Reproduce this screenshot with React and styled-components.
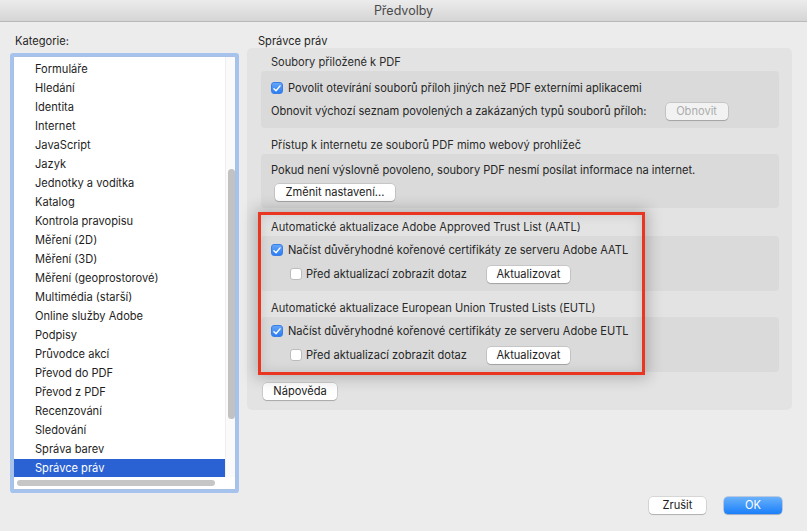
import React from 'react'
import styled, { createGlobalStyle } from 'styled-components'

const Global = createGlobalStyle`
  html, body { margin: 0; padding: 0; background: #ececec; }
  * { box-sizing: border-box; }
`

const Window = styled.div`
  width: 807px;
  height: 531px;
  background: #ececec;
  display: flex;
  flex-direction: column;
  font-family: Inter, "Liberation Sans", sans-serif;
  font-size: 11.1px;
  color: #262626;
  overflow: hidden;
`

const TitleBar = styled.div`
  height: 22px;
  flex: none;
  background: linear-gradient(#ececec, #d5d5d5);
  border-bottom: 1px solid #b9b9b9;
  display: flex;
  align-items: center;
  justify-content: center;
  font-size: 12.5px;
  color: #4a4a4a;
`

const Content = styled.div`
  flex: 1;
  display: flex;
  gap: 11px;
  padding: 0 15px 0 13px;
  min-height: 0;
`

const Sidebar = styled.div`
  width: 223px;
  display: flex;
  flex-direction: column;
`

const Caption = styled.div`
  line-height: 14px;
  margin-top: 12px;
  padding-left: ${p => p.$indent || 2}px;
  color: #262626;
`

const ListFrame = styled.div`
  margin-top: 8px;
  height: 434px;
  background: #fff;
  border: 1px solid #a9bfe3;
  box-shadow: 0 0 0 3px #a6c3ee;
  border-radius: 1px;
  display: grid;
  grid-template-columns: 1fr 10px;
  grid-template-rows: 1fr 12px;
`

const Items = styled.div`
  padding-top: 3px;
  overflow: hidden;
`

const Item = styled.div`
  height: 19px;
  line-height: 19px;
  padding-left: 21px;
  white-space: nowrap;
  color: ${p => (p.$selected ? '#fff' : '#1e1e1e')};
  background: ${p => (p.$selected ? '#2a62d3' : 'transparent')};
`

const VTrack = styled.div`
  background: #fafafa;
  border-left: 1px solid #efefef;
  padding: 0 1px 0 2px;
`

const VThumb = styled.div`
  margin-top: ${p => p.$top}px;
  height: ${p => p.$size}px;
  width: 7px;
  border-radius: 4px;
  background: #c2c2c2;
`

const HTrack = styled.div`
  grid-column: 1 / 3;
  padding: 3px 20px 0 3px;
`

const HThumb = styled.div`
  height: 6px;
  border-radius: 3px;
  background: #c6c6c6;
`

const Main = styled.div`
  flex: 1;
  display: flex;
  flex-direction: column;
`

const Panel = styled.div`
  position: relative;
  height: 362px;
  background: #e3e3e3;
  border-radius: 5px;
  padding: 7px 13px 0 14px;
`

const GroupLabel = styled.div`
  line-height: 15px;
  padding-left: 10px;
  margin-top: ${p => p.$gap || 0}px;
  margin-bottom: 1px;
  color: #2b2b2b;
`

const Box = styled.div`
  background: #dadada;
  border-radius: 4px;
  padding: ${p => p.$pt}px 10px ${p => p.$pb}px;
  display: flex;
  flex-direction: column;
  gap: ${p => p.$gap}px;
`

const Row = styled.div`
  height: 18px;
  display: flex;
  align-items: center;
  padding-left: ${p => p.$indent || 0}px;
  white-space: nowrap;
`

const Check = styled.span`
  width: 12px;
  height: 12px;
  flex: none;
  border-radius: 3px;
  margin-right: ${p => (p.$on ? 5 : 4)}px;
  display: inline-flex;
  align-items: center;
  justify-content: center;
  background: ${p => (p.$on ? 'linear-gradient(#63a5f8, #2d7df3)' : '#fff')};
  border: 1px solid ${p => (p.$on ? '#3a7fe6' : '#bcbcbc')};
`

const Button = styled.button`
  font: inherit;
  height: 17px;
  padding: 0;
  width: ${p => p.$w}px;
  margin-left: ${p => p.$ml || 0}px;
  border: none;
  border-radius: 4px;
  background: ${p => (p.$disabled ? '#f2f2f2' : '#fff')};
  color: ${p => (p.$disabled ? '#acacac' : '#222')};
  box-shadow: 0 0 0 0.5px rgba(0, 0, 0, 0.18), 0 1px 1px rgba(0, 0, 0, 0.18);
  line-height: 17px;
  flex: none;
`

const PrimaryButton = styled(Button)`
  background: linear-gradient(#69b1fa, #1a7ffa);
  color: #fff;
  box-shadow: 0 0 0 0.5px rgba(0, 60, 180, 0.4), 0 1px 1px rgba(0, 0, 0, 0.15);
`

const HelpRow = styled.div`
  margin-top: 11px;
  padding-left: 2px;
`

const Highlight = styled.div`
  position: absolute;
  left: 11px;
  top: 164px;
  width: 387px;
  height: 163px;
  border: 3px solid #ea3620;
  box-shadow: 0 0 14px 3px rgba(0, 0, 0, 0.22), inset 0 0 12px rgba(0, 0, 0, 0.12);
  pointer-events: none;
`

const Footer = styled.div`
  flex: none;
  display: flex;
  justify-content: flex-end;
  gap: 18px;
  padding: 7px 25px 17px 0;
`

const categories = [
  'Formuláře', 'Hledání', 'Identita', 'Internet', 'JavaScript', 'Jazyk',
  'Jednotky a vodítka', 'Katalog', 'Kontrola pravopisu', 'Měření (2D)',
  'Měření (3D)', 'Měření (geoprostorové)', 'Multimédia (starší)',
  'Online služby Adobe', 'Podpisy', 'Průvodce akcí', 'Převod do PDF',
  'Převod z PDF', 'Recenzování', 'Sledování', 'Správa barev', 'Správce práv',
]

function Tick() {
  return (
    <svg width="8" height="7" viewBox="0 0 9 8">
      <path d="M1 4.2 L3.4 6.6 L8 1" fill="none" stroke="#fff" strokeWidth="1.6" strokeLinecap="round" strokeLinejoin="round" />
    </svg>
  )
}

function CheckRow({ on, indent, children }) {
  return (
    <Row $indent={indent}>
      <Check $on={on}>{on && <Tick />}</Check>
      {children}
    </Row>
  )
}

export default function App() {
  return (
    <Window>
      <Global />
      <TitleBar>Předvolby</TitleBar>
      <Content>
        <Sidebar>
          <Caption>Kategorie:</Caption>
          <ListFrame>
            <Items>
              {categories.map(c => (
                <Item key={c} $selected={c === 'Správce práv'}>{c}</Item>
              ))}
            </Items>
            <VTrack>
              <VThumb $top={112} $size={250} />
            </VTrack>
            <HTrack>
              <HThumb />
            </HTrack>
          </ListFrame>
        </Sidebar>
        <Main>
          <Caption $indent={11}>Správce práv</Caption>
          <Panel>
            <GroupLabel>Soubory přiložené k PDF</GroupLabel>
            <Box $pt={8} $pb={8} $gap={5}>
              <CheckRow on>Povolit otevírání souborů příloh jiných než PDF externími aplikacemi</CheckRow>
              <Row>
                Obnovit výchozí seznam povolených a zakázaných typů souborů příloh:
                <Button $w={62} $ml={19} $disabled>Obnovit</Button>
              </Row>
            </Box>

            <GroupLabel $gap={10}>Přístup k internetu ze souborů PDF mimo webový prohlížeč</GroupLabel>
            <Box $pt={7} $pb={7} $gap={4}>
              <Row>Pokud není výslovně povoleno, soubory PDF nesmí posílat informace na internet.</Row>
              <Row $indent={4}>
                <Button $w={120}>Změnit nastavení...</Button>
              </Row>
            </Box>

            <GroupLabel $gap={12}>Automatické aktualizace Adobe Approved Trust List (AATL)</GroupLabel>
            <Box $pt={5} $pb={8} $gap={6}>
              <CheckRow on>Načíst důvěryhodné kořenové certifikáty ze serveru Adobe AATL</CheckRow>
              <CheckRow indent={19}>
                Před aktualizací zobrazit dotaz
                <Button $w={83} $ml={20}>Aktualizovat</Button>
              </CheckRow>
            </Box>

            <GroupLabel $gap={10}>Automatické aktualizace European Union Trusted Lists (EUTL)</GroupLabel>
            <Box $pt={5} $pb={8} $gap={6}>
              <CheckRow on>Načíst důvěryhodné kořenové certifikáty ze serveru Adobe EUTL</CheckRow>
              <CheckRow indent={19}>
                Před aktualizací zobrazit dotaz
                <Button $w={83} $ml={20}>Aktualizovat</Button>
              </CheckRow>
            </Box>

            <HelpRow>
              <Button $w={74}>Nápověda</Button>
            </HelpRow>

            <Highlight />
          </Panel>
        </Main>
      </Content>
      <Footer>
        <Button $w={57}>Zrušit</Button>
        <PrimaryButton $w={58}>OK</PrimaryButton>
      </Footer>
    </Window>
  )
}
